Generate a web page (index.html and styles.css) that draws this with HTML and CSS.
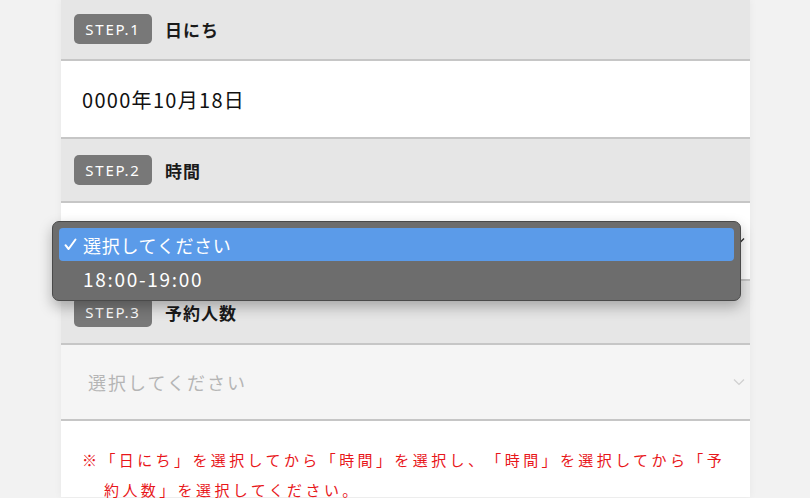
FILE: index.html
```html
<!DOCTYPE html>
<html lang="ja">
<head>
<meta charset="utf-8">
<title>予約</title>
<link rel="stylesheet" href="styles.css">
</head>
<body>
<main class="form">
  <section class="step-head step-head--first">
    <span class="badge">STEP.1</span>
    <span class="step-label">日にち</span>
  </section>
  <div class="date-box">0000年10月18日</div>

  <section class="step-head">
    <span class="badge">STEP.2</span>
    <span class="step-label">時間</span>
  </section>
  <div class="select-box select-box--active">
    <span class="select-value"></span>
    <svg class="chev chev--dark" width="12" height="8" viewBox="0 0 12 8"><path d="M1 1.5 L6 6.5 L11 1.5" fill="none" stroke="currentColor" stroke-width="1.4"/></svg>
  </div>

  <section class="step-head">
    <span class="badge">STEP.3</span>
    <span class="step-label">予約人数</span>
  </section>
  <div class="select-box select-box--disabled">
    <span class="placeholder">選択してください</span>
    <svg class="chev" width="12" height="8" viewBox="0 0 12 8"><path d="M1 1.5 L6 6.5 L11 1.5" fill="none" stroke="currentColor" stroke-width="1.2"/></svg>
  </div>

  <div class="note">※「日にち」を選択してから「時間」を選択し、「時間」を選択してから「予約人数」を選択してください。</div>
</main>

<div class="menu">
  <div class="menu-item menu-item--selected"><span class="check"><svg width="13" height="13" viewBox="0 0 13 13"><path d="M1.5 7.2 L4.6 11 L11.5 1.5" fill="none" stroke="#fff" stroke-width="2" stroke-linecap="round" stroke-linejoin="round"/></svg></span>選択してください</div>
  <div class="menu-item menu-item--plain"><span class="check"></span>18:00-19:00</div>
</div>
</body>
</html>
```

FILE: styles.css
```css
html, body {
  margin: 0;
  padding: 0;
}
body {
  background: #f2f2f2;
  font-family: "Noto Sans CJK JP", "Noto Sans", sans-serif;
  width: 810px;
  height: 498px;
  overflow: hidden;
  position: relative;
}
.form {
  margin-left: 61px;
  width: 689px;
  box-shadow: 0 0 8px rgba(0,0,0,0.05);
}
.step-head {
  display: flex;
  align-items: center;
  gap: 13px;
  padding-left: 13px;
  height: 64px;
  background: #e6e6e6;
  border-bottom: 2px solid #c6c6c6;
  box-sizing: border-box;
}
.step-head--first {
  height: 61px;
  padding-bottom: 1px;
}
.badge {
  display: inline-flex;
  align-items: center;
  justify-content: center;
  width: 78px;
  height: 30px;
  background: #787878;
  color: #fff;
  border-radius: 5px;
  font-family: "Noto Sans", sans-serif;
  font-size: 15px;
  letter-spacing: 1.8px;
}
.step-label {
  font-size: 17px;
  font-weight: 700;
  letter-spacing: 1px;
  color: #1a1a1a;
}
.date-box {
  height: 78px;
  box-sizing: border-box;
  background: #fff;
  border-bottom: 2px solid #c6c6c6;
  display: flex;
  align-items: center;
  padding-left: 21px;
  font-size: 20px;
  letter-spacing: 1.3px;
  color: #111;
}
.select-box {
  height: 78px;
  box-sizing: border-box;
  display: flex;
  align-items: center;
  justify-content: space-between;
  padding: 0 5px 0 27px;
  border-bottom: 2px solid #c6c6c6;
}
.select-box--active {
  background: #fff;
}
.select-box--disabled {
  height: 76px;
  background: #f5f5f5;
}
.placeholder {
  font-size: 18px;
  letter-spacing: 2px;
  color: #b5b5b5;
}
.chev {
  color: #cfcfcf;
}
.chev--dark {
  color: #333;
}
.note {
  background: #fff;
  height: 76px;
  box-sizing: border-box;
  padding: 24px 14px 0 43px;
  text-indent: -22px;
  font-size: 15px;
  line-height: 30px;
  letter-spacing: 3.4px;
  color: #e8161a;
  text-spacing-trim: space-all;
}
.menu {
  position: absolute;
  left: 52px;
  top: 221px;
  width: 689px;
  height: 80px;
  box-sizing: border-box;
  padding: 6px 6px;
  background: #6d6d6d;
  border: 1px solid #4a4a4a;
  border-radius: 7px;
  box-shadow: 0 6px 14px rgba(0,0,0,0.28);
}
.menu-item {
  height: 33px;
  display: flex;
  align-items: center;
  padding-left: 4px;
  border-radius: 4px;
  color: #fff;
  font-size: 18px;
  letter-spacing: 0.7px;
}
.menu-item--plain {
  height: 34px;
  font-size: 19px;
  letter-spacing: 1.7px;
}
.menu-item--selected {
  background: #5b9be9;
}
.check {
  display: inline-flex;
  align-items: center;
  width: 19px;
  height: 13px;
  padding-left: 1px;
}
```
